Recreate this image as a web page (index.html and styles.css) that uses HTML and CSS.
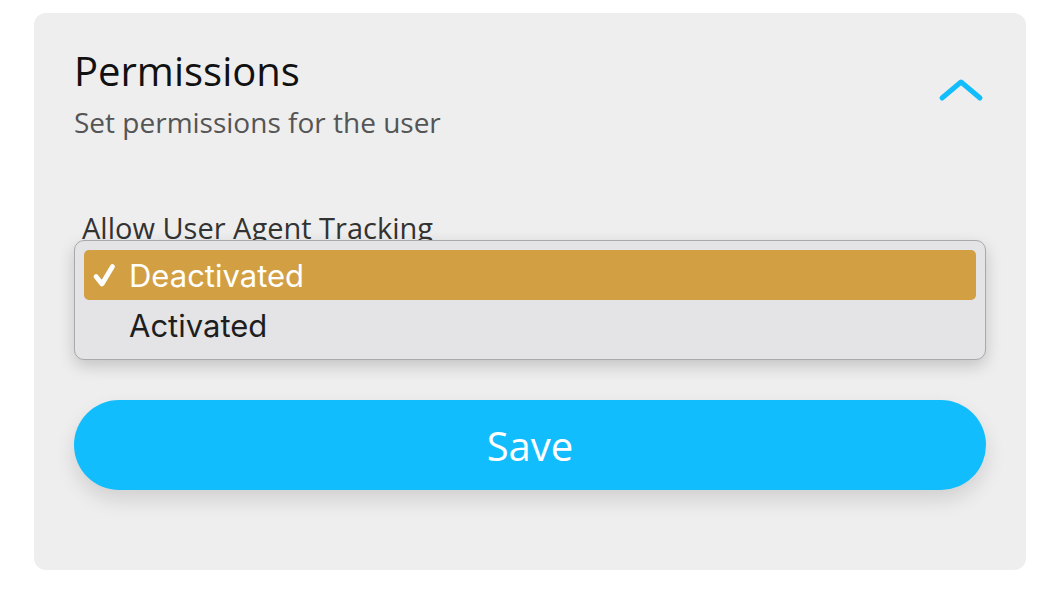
FILE: index.html
```html
<!DOCTYPE html>
<html lang="en">
<head>
    <meta charset="UTF-8">
    <meta name="viewport" content="width=device-width, initial-scale=1.0">
    <title>Permissions</title>
    <link rel="stylesheet" href="styles.css">
</head>
<body>
    <div class="card">
        <div class="card-header">
            <div class="heading">
                <h1>Permissions</h1>
                <p class="subtitle">Set permissions for the user</p>
            </div>
            <button class="collapse" type="button" aria-label="Collapse">
                <svg width="46" height="26" viewBox="0 0 46 26">
                    <path d="M4 20 L23 4 L42 20" fill="none" stroke="#12bdfd" stroke-width="5" stroke-linecap="round" stroke-linejoin="round"/>
                </svg>
            </button>
        </div>

        <div class="field">
            <label for="tracking">Allow User Agent Tracking</label>
            <div class="select-wrap">
                <div class="select" id="tracking">Deactivated</div>
                <ul class="options">
                    <li class="option selected">
                        <svg class="check" width="26" height="26" viewBox="0 0 26 26">
                            <path d="M5 13.5 L11 21 L21.5 3.5" fill="none" stroke="#fff" stroke-width="4.8" stroke-linecap="round" stroke-linejoin="round"/>
                        </svg>
                        Deactivated
                    </li>
                    <li class="option">Activated</li>
                </ul>
            </div>
        </div>

        <button class="save" type="button">Save</button>
    </div>
</body>
</html>
```

FILE: styles.css
```css
body {
    margin: 0;
    background-color: #ffffff;
    font-family: 'Open Sans', 'Noto Sans', sans-serif;
}

.card {
    margin: 13px 0 0 34px;
    width: 992px;
    height: 557px;
    box-sizing: border-box;
    padding: 33px 40px 0 40px;
    background-color: #eeeeee;
    border-radius: 12px;
}

.card-header {
    display: flex;
    justify-content: space-between;
    align-items: center;
}

h1 {
    margin: 0;
    font-size: 40px;
    font-weight: 400;
    line-height: 50px;
    color: #111111;
}

.subtitle {
    margin: 7px 0 0 0;
    font-size: 28px;
    line-height: 38px;
    color: #555555;
}

.collapse {
    border: none;
    background: none;
    padding: 0;
    margin: 0 2px 6px 0;
    cursor: pointer;
}

.collapse svg {
    display: block;
}

.field {
    margin-top: 70px;
}

label {
    display: block;
    padding-left: 8px;
    font-size: 29px;
    line-height: 34px;
    color: #333333;
}

.select-wrap {
    position: relative;
    height: 60px;
}

.select {
    height: 60px;
}

.options {
    position: absolute;
    top: -5px;
    left: 0;
    right: 0;
    margin: 0;
    padding: 9px;
    list-style: none;
    background-color: #e4e4e6;
    border: 1px solid #a9a9ab;
    border-radius: 10px;
    box-shadow: 0 6px 16px rgba(0, 0, 0, 0.18);
    font-family: Inter, 'Liberation Sans', sans-serif;
}

.option {
    display: flex;
    align-items: center;
    height: 50px;
    padding-left: 45px;
    font-size: 31px;
    color: #1e1e1e;
    border-radius: 5px;
}

.option.selected {
    position: relative;
    background-color: #d2a042;
    color: #ffffff;
}

.check {
    position: absolute;
    left: 7px;
    top: 13px;
}

.save {
    display: block;
    width: 100%;
    height: 90px;
    margin-top: 95px;
    border: none;
    border-radius: 45px;
    background-color: #12bdfd;
    color: #ffffff;
    font-family: 'Open Sans', 'Noto Sans', sans-serif;
    font-size: 40px;
    box-shadow: 0 10px 20px rgba(0, 0, 0, 0.12);
    cursor: pointer;
}
```
